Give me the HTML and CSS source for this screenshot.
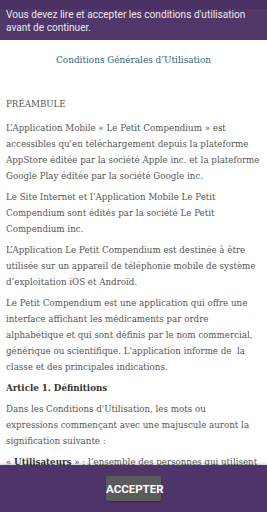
FILE: index.html
```html
<!DOCTYPE html>
<html lang="fr">

<head>
    <meta charset="UTF-8">
    <meta name="viewport" content="width=device-width, initial-scale=1.0">
    <title>Conditions d'utilisation</title>
    <link rel="stylesheet" href="styles.css">
</head>

<body>
    <div class="notice">Vous devez lire et accepter les conditions d'utilisation avant de continuer.</div>

    <div class="terms">
        <h2 class="terms-title">Conditions Générales d’Utilisation</h2>
        <p class="preamble">PRÉAMBULE</p>
        <p>L’Application Mobile « Le Petit Compendium » est accessibles qu'en téléchargement depuis la plateforme AppStore éditée par la société Apple inc. et la plateforme Google Play éditée par la société Google inc.</p>
        <p>Le Site Internet et l’Application Mobile Le Petit Compendium sont édités par la société Le Petit Compendium inc.</p>
        <p>L’Application Le Petit Compendium est destinée à être utilisée sur un appareil de téléphonie mobile de système d’exploitation iOS et Androïd.</p>
        <p>Le Petit Compendium est une application qui offre une interface affichant les médicaments par ordre alphabétique et qui sont définis par le nom commercial, générique ou scientifique. L'application informe de&nbsp; la classe et des principales indications.</p>
        <h3 class="article">Article 1. Définitions</h3>
        <p class="intro">Dans les Conditions d'Utilisation, les mots ou expressions commençant avec une majuscule auront la signification suivante :</p>
        <p>« <b>Utilisateurs</b> » : l’ensemble des personnes qui utilisent l’Application Mobile ou le Site Internet.</p>
    </div>

    <div class="actions">
        <button class="accept">ACCEPTER</button>
    </div>
</body>

</html>
```

FILE: styles.css
```css
body,
html {
    height: 100%;
    margin: 0;
}

body {
    display: flex;
    flex-direction: column;
    background-color: #fff;
    overflow: hidden;
}

.notice {
    background: linear-gradient(#4a3063 0, #4a3063 9px, #503669 9px);
    color: #ece6f1;
    font-family: Roboto, sans-serif;
    font-size: 10.1px;
    line-height: 13px;
    padding: 8px 6px 6px;
}

.terms {
    flex: 1;
    overflow: hidden;
    padding: 0 6px;
    font-family: "DejaVu Serif", serif;
    font-size: 8.7px;
    line-height: 16px;
    color: #555;
}

.terms-title {
    margin: 12px 0 28px;
    text-align: center;
    font-size: 8.9px;
    font-weight: normal;
    color: #2f6479;
}

.terms p {
    margin: 0 0 5px;
}

.terms .preamble {
    margin-bottom: 8px;
}

.terms .intro {
    padding-right: 8px;
}

.terms b,
.article {
    color: #333;
    font-weight: bold;
}

.article {
    font-size: 8.7px;
    margin: 0 0 5px;
}

.actions {
    background-color: #4f3469;
    height: 47px;
    display: flex;
    justify-content: center;
    align-items: center;
    box-shadow: 0 -1px 3px rgba(0, 0, 0, 0.25);
    z-index: 1;
}

.accept {
    background-color: #5b5a5c;
    color: #fff;
    border: none;
    border-radius: 2px;
    font-family: Roboto, sans-serif;
    font-weight: bold;
    font-size: 11.5px;
    width: 55px;
    height: 25px;
    padding: 0;
    box-shadow: 0 1px 2px rgba(0, 0, 0, 0.3);
}
```
